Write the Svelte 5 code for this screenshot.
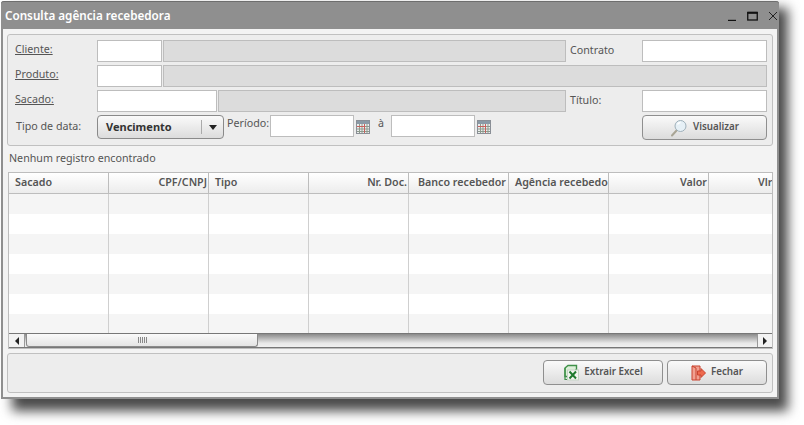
<script lang="ts">
	const columns = [
		{ label: 'Sacado', cls: 'left' },
		{ label: 'CPF/CNPJ', cls: 'right' },
		{ label: 'Tipo', cls: 'left' },
		{ label: 'Nr. Doc.', cls: 'right' },
		{ label: 'Banco recebedor', cls: 'center' },
		{ label: 'Agência recebedora', cls: 'left' },
		{ label: 'Valor', cls: 'right' },
		{ label: 'Vlr', cls: 'last' }
	];
	const rows = [0, 1, 2, 3, 4, 5, 6];
</script>

{#snippet calendar()}
	<svg class="cal" width="14" height="14" viewBox="0 0 14 14">
		<rect x="0.5" y="0.5" width="13" height="13" fill="#eceeee" stroke="#8a8f96" />
		<rect x="1" y="1" width="12" height="3" fill="#8a9aa6" />
		<path d="M1 6.5h12M1 9h12M1 11.5h12M3.5 4v9M6 4v9M8.5 4v9M11 4v9" stroke="#8d9a8d" stroke-width="1" />
		<path d="M8.5 4v9M1 6.5h7" stroke="#c8605c" stroke-width="1" />
	</svg>
{/snippet}

<div class="desktop">
	<div class="window">
		<header class="titlebar">
			<span class="title">Consulta agência recebedora</span>
			<div class="controls">
				<svg width="10" height="10" viewBox="0 0 10 10"><path d="M1 9.5h8" stroke="#111" stroke-width="1.4" /></svg>
				<svg width="11" height="10" viewBox="0 0 11 10"><rect x="0.75" y="1.5" width="9.5" height="7.5" fill="none" stroke="#111" stroke-width="1.3" /><path d="M0.5 1.8h10" stroke="#111" stroke-width="2" /></svg>
				<svg width="10" height="10" viewBox="0 0 10 10"><path d="M1 1l8 8M9 1l-8 8" stroke="#222" stroke-width="1" /></svg>
			</div>
		</header>

		<div class="content">
			<section class="panel form">
				<div class="row">
					<span class="label"><u>Cliente:</u></span>
					<div class="input code"></div>
					<div class="input ro grow"></div>
					<span class="side-label">Contrato</span>
					<div class="input side"></div>
				</div>
				<div class="row">
					<span class="label"><u>Produto:</u></span>
					<div class="input code"></div>
					<div class="input ro grow"></div>
				</div>
				<div class="row">
					<span class="label"><u>Sacado:</u></span>
					<div class="input code wide"></div>
					<div class="input ro grow"></div>
					<span class="side-label">Título:</span>
					<div class="input side"></div>
				</div>
				<div class="row last-row">
					<span class="label">Tipo de data:</span>
					<div class="select">
						<span class="select-value">Vencimento</span>
						<span class="select-arrow"><i></i></span>
					</div>
					<span class="periodo">Período:</span>
					<div class="input date"></div>
					{@render calendar()}
					<span class="a">à</span>
					<div class="input date"></div>
					{@render calendar()}
					<button class="btn visualizar">
						<svg width="18" height="18" viewBox="0 0 18 18">
							<path d="M7 11l-5 5.5" stroke="#a9a595" stroke-width="2" stroke-linecap="round" />
							<circle cx="10.5" cy="7" r="5.5" fill="#e6f0f6" stroke="#9fb0ba" stroke-width="1" />
							<path d="M7.5 5.5a3.5 3.5 0 0 1 3-2" stroke="#fff" stroke-width="1.5" fill="none" />
						</svg>
						<span>Visualizar</span>
					</button>
				</div>
			</section>

			<p class="status">Nenhum registro encontrado</p>

			<section class="table">
				<div class="thead">
					{#each columns as col}
						<div class="th {col.cls}"><span>{col.label}</span></div>
					{/each}
				</div>
				<div class="tbody">
					{#each rows as r}
						<div class="tr" class:odd={r % 2 === 0}>
							{#each columns as _}
								<div class="td"></div>
							{/each}
						</div>
					{/each}
				</div>
				<div class="scrollbar">
					<span class="sb-btn"><i class="arrow-l"></i></span>
					<div class="sb-track">
						<div class="sb-thumb"><span class="grip"></span></div>
					</div>
					<span class="sb-btn"><i class="arrow-r"></i></span>
				</div>
			</section>

			<footer class="panel actions">
				<button class="btn excel">
					<svg width="16" height="17" viewBox="0 0 16 17">
						<path d="M2 4L5 1.5h8.5v11H2z" fill="#dcefd8" stroke="#3f9149" stroke-width="1.4" />
						<path d="M2 4v11.5h11V5" fill="none" stroke="#3f9149" stroke-width="1.2" />
						<rect x="4.5" y="6" width="11" height="10" fill="#f2f5f0" stroke="#c5d3c5" />
						<path d="M6.5 7.5l6.5 7M13 7.5l-6.5 7" stroke="#1f7a2e" stroke-width="2" />
					</svg>
					<span>Extrair Excel</span>
				</button>
				<button class="btn fechar">
					<svg width="15" height="16" viewBox="0 0 15 16">
						<path d="M1 1h8v14H1z" fill="#f0a090" stroke="#c9432f" />
						<path d="M1 1l4 2v12" fill="none" stroke="#c9432f" />
						<path d="M6.5 6h3.5V3.5L14.5 8 10 12.5V10H6.5z" fill="#ee6a4e" stroke="#c9432f" stroke-width="1" />
					</svg>
					<span>Fechar</span>
				</button>
			</footer>
		</div>
	</div>
</div>

<style>
	:global(body) {
		background: #fff;
		font-family: 'Noto Sans', 'DejaVu Sans', sans-serif;
		font-size: 10.7px;
		color: #555;
	}

	.desktop {
		position: relative;
		height: 425px;
		overflow: hidden;
		padding: 1px 0 0 1px;
		box-sizing: border-box;
	}

	/* the window's drop shadow, lying behind it */
	.desktop::before {
		content: '';
		position: absolute;
		left: 12px;
		top: 8px;
		width: 776px;
		height: 403px;
		background: #4a4a4a;
		filter: blur(6px);
	}

	.window {
		position: relative;
		width: 778px;
		height: 398px;
		background: #f3f3f3;
		border: 2px solid #8f8f8f;
		border-top: 0;
		box-sizing: border-box;
		border-radius: 3px 3px 0 0;
		display: flex;
		flex-direction: column;
	}

	.titlebar {
		height: 28px;
		margin: 0 -2px;
		background: #8f8f8f;
		border-top: 1px solid #6e6e6e;
		box-sizing: border-box;
		display: flex;
		align-items: center;
		justify-content: space-between;
		padding: 0 1px 2px 4px;
		border-radius: 3px 3px 0 0;
	}

	.title {
		color: #fff;
		font-size: 11.7px;
		font-weight: 600;
	}

	.controls {
		display: flex;
		align-items: center;
		gap: 10px;
		margin-top: 2px;
	}

	.content {
		flex: 1;
		display: flex;
		flex-direction: column;
		padding: 5px 4px 3px 4px;
		min-height: 0;
	}

	.panel {
		background: #ededed;
		border: 1px solid #c0c0c0;
		border-radius: 3px;
		box-sizing: border-box;
	}

	.form {
		height: 112px;
		flex: none;
		padding: 5px 5px 0 7px;
		display: flex;
		flex-direction: column;
		gap: 3px;
	}

	.row {
		display: flex;
		align-items: center;
		height: 22px;
	}

	.last-row {
		height: 25px;
		align-items: flex-start;
	}

	.label {
		width: 82px;
		flex: none;
		margin-top: -5px;
	}

	.last-row .label {
		margin-top: 4px;
		padding-left: 1px;
		box-sizing: border-box;
	}

	.input {
		height: 22px;
		box-sizing: border-box;
		background: #fff;
		border: 1px solid #bdbdbd;
		flex: none;
	}

	.code {
		width: 65px;
		margin-right: 1px;
	}

	.code.wide {
		width: 120px;
	}

	.ro {
		background: #dcdcdc;
	}

	.grow {
		flex: 1;
	}

	.side-label {
		width: 76px;
		padding-left: 4px;
		box-sizing: border-box;
		flex: none;
		margin-top: -3px;
	}

	.side {
		width: 125px;
	}

	.select {
		width: 127px;
		height: 24px;
		box-sizing: border-box;
		border: 1px solid #8a8a8a;
		border-radius: 4px;
		background: linear-gradient(#fafafa, #dcdcdc);
		display: flex;
		align-items: center;
		justify-content: space-between;
		color: #333;
	}

	.select-value {
		font-weight: 700;
		font-size: 11px;
		padding: 0 0 2px 8px;
	}

	.select-arrow {
		width: 21px;
		height: 14px;
		border-left: 1px solid #aaa;
		display: flex;
		align-items: center;
		justify-content: center;
	}

	.select-arrow i {
		border-left: 4px solid transparent;
		border-right: 4px solid transparent;
		border-top: 5px solid #222;
		margin-top: 1px;
	}

	.periodo {
		width: 46px;
		flex: none;
		padding-left: 3px;
		box-sizing: border-box;
		margin-top: 1px;
	}

	.date {
		width: 84px;
	}

	.cal {
		flex: none;
		margin: 5px 0 0 2px;
	}

	.a {
		width: 21px;
		flex: none;
		padding-left: 8px;
		box-sizing: border-box;
		margin-top: 1px;
	}

	.btn {
		height: 25px;
		box-sizing: border-box;
		border: 1px solid #8f8f8f;
		border-radius: 4px;
		background: linear-gradient(#fafafa, #dcdcdc);
		font: inherit;
		font-weight: 600;
		font-size: 9.8px;
		color: #555;
		display: flex;
		align-items: center;
		justify-content: center;
		gap: 5px;
		padding: 0;
	}

	.btn span {
		margin-top: -2px;
	}

	.visualizar {
		width: 125px;
		margin-left: auto;
	}

	.status {
		margin: 0;
		height: 26px;
		flex: none;
		padding: 5px 0 0 2px;
		box-sizing: border-box;
	}

	.table {
		margin-left: 1px;
		height: 177px;
		flex: none;
		border: 1px solid #bdbdbd;
		box-sizing: border-box;
		overflow: hidden;
		display: flex;
		flex-direction: column;
		background: #fff;
	}

	.thead,
	.tr {
		display: grid;
		grid-template-columns: repeat(8, 100px);
	}

	.thead {
		height: 20px;
		flex: none;
		background: linear-gradient(#fff, #ececec);
		border-bottom: 1px solid #bdbdbd;
	}

	.th {
		border-right: 1px solid #bdbdbd;
		box-sizing: border-box;
		overflow: hidden;
		white-space: nowrap;
		font-weight: 600;
		line-height: 18px;
		color: #555;
		padding: 0 1px 0 6px;
		display: flex;
	}

	.th.right {
		justify-content: flex-end;
	}

	.th.center {
		padding-left: 9px;
	}

	.th.last {
		padding-left: 49px;
	}

	.tbody {
		flex: 1;
		min-height: 0;
	}

	.tr {
		height: 20px;
	}

	.tr.odd {
		background: #f5f5f5;
	}

	.td {
		border-right: 1px solid #cfcfcf;
		box-sizing: border-box;
	}

	.scrollbar {
		height: 15px;
		flex: none;
		display: flex;
		width: 764px;
		border-top: 1px solid #777;
		border-bottom: 1px solid #777;
		box-sizing: border-box;
	}

	.sb-btn {
		width: 16px;
		flex: none;
		background: #f2f2f2;
		border-right: 1px solid #999;
		display: flex;
		align-items: center;
		justify-content: center;
		box-sizing: border-box;
	}

	.sb-btn:last-child {
		border-right: 1px solid #777;
		border-left: 1px solid #999;
	}

	.arrow-l {
		border-top: 4px solid transparent;
		border-bottom: 4px solid transparent;
		border-right: 4px solid #222;
	}

	.arrow-r {
		border-top: 4px solid transparent;
		border-bottom: 4px solid transparent;
		border-left: 4px solid #222;
	}

	.sb-track {
		flex: 1;
		background: linear-gradient(#8a8a8a, #e8e8e8 70%, #f0f0f0);
	}

	.sb-thumb {
		width: 232px;
		height: 13px;
		margin-left: 1px;
		box-sizing: border-box;
		border: 1px solid #8a8a8a;
		border-top: 0;
		border-radius: 0 0 3px 3px;
		background: linear-gradient(#fafafa, #e4e4e4);
		display: flex;
		align-items: center;
		justify-content: center;
	}

	.grip {
		width: 9px;
		height: 6px;
		background: repeating-linear-gradient(90deg, #888 0 1px, transparent 1px 2px);
	}

	.actions {
		margin-top: 4px;
		height: 40px;
		flex: none;
		display: flex;
		justify-content: flex-end;
		align-items: flex-start;
		gap: 4px;
		padding: 6px 5px 0 0;
	}

	.excel {
		width: 120px;
	}

	.fechar {
		width: 100px;
	}
</style>
